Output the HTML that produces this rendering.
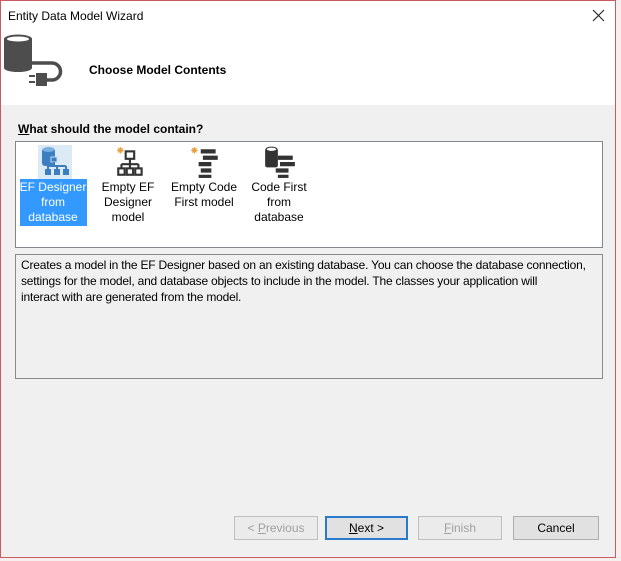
<!DOCTYPE html>
<html><head><meta charset="utf-8">
<style>
*{margin:0;padding:0;box-sizing:border-box}
body{width:621px;height:561px;background:#f7eeee;font-family:"Liberation Sans",sans-serif;font-size:12px;color:#000;position:relative;overflow:hidden}
.win{position:absolute;left:0;top:0;width:616px;height:558px;border:1px solid #c85a64;background:#f0f0f0;overflow:hidden}
.hdr{position:absolute;left:0;top:0;width:614px;height:104px;background:#fff}
.t{position:absolute;white-space:nowrap}
.box{position:absolute;border:1px solid #828790;background:#fff}
.btn{position:absolute;top:515px;height:24px;border:1px solid #adadad;background:#e1e1e1;text-align:center;line-height:22px}
.dis{color:#a0a0a0;border-color:#bfbfbf;background:#ebebeb}
.item{position:absolute;top:179px;width:70px;text-align:center;line-height:15px}
</style></head><body>
<div class="win">
<div class="hdr">
 <div class="t" style="left:7px;top:8px;font-size:12px">Entity Data Model Wizard</div>
 <svg style="position:absolute;left:591px;top:8px" width="13" height="13" viewBox="0 0 13 13"><path d="M1 1 L12 12 M12 1 L1 12" stroke="#222" stroke-width="1.1"/></svg>
 <svg style="position:absolute;left:0;top:32px" width="66" height="56" viewBox="0 0 66 56">
  <rect x="3" y="5" width="28" height="30" fill="#4d4d4d"/>
  <ellipse cx="17" cy="35" rx="14" ry="4" fill="#4d4d4d"/>
  <ellipse cx="17" cy="6" rx="14" ry="4.5" fill="#4d4d4d"/>
  <ellipse cx="17" cy="6" rx="11" ry="2.5" fill="#fff"/>
  <path d="M31 30 H51 A8.5 8.5 0 0 1 51 47 H46" stroke="#4d4d4d" stroke-width="3.5" fill="none"/>
  <rect x="35" y="40" width="11" height="13" fill="#4d4d4d"/>
  <rect x="28" y="42" width="6" height="2" fill="#4d4d4d"/><rect x="28" y="48" width="6" height="2" fill="#4d4d4d"/>
 </svg>
 <div class="t" style="left:88px;top:62px;font-weight:bold">Choose Model Contents</div>
</div>
<div class="t" style="left:17px;top:121px;font-weight:bold"><u>W</u>hat should the model contain?</div>
<div class="box" style="left:14px;top:140px;width:588px;height:107px">
 <svg style="position:absolute;left:22px;top:3px" width="34" height="34" viewBox="0 0 34 34">
  <rect x="0" y="0" width="34" height="34" fill="#c5dcef" opacity=".6"/>
  <rect x="4" y="3" width="13" height="18" rx="3" fill="#3c7fc0"/>
  <ellipse cx="10.5" cy="4.5" rx="6" ry="2.5" fill="#7ab0e0"/>
  <rect x="13" y="12" width="6" height="5" fill="#3c7fc0" stroke="#c5dcef"/>
  <path d="M16 17 V21 M10 21 H28 M10 21 V24 M19 21 V24 M28 21 V24" stroke="#3c7fc0" stroke-width="2"/>
  <rect x="7" y="24" width="6" height="6" fill="#3c7fc0"/><rect x="16" y="24" width="6" height="6" fill="#3c7fc0"/><rect x="25" y="24" width="6" height="6" fill="#3c7fc0"/>
 </svg>
 <svg style="position:absolute;left:98px;top:3px" width="34" height="34" viewBox="0 0 30 32">
  <path d="M5 2 V8 M2 5 H8 M3 3 L7 7 M7 3 L3 7" stroke="#e8a040" stroke-width="1.2"/>
  <rect x="10" y="6" width="8" height="7" fill="none" stroke="#333" stroke-width="2"/>
  <path d="M14 13 V18 M6 18 H22 M6 18 V22 M14 18 V22 M22 18 V22" stroke="#333" stroke-width="2"/>
  <rect x="3" y="22" width="6" height="6" fill="none" stroke="#333" stroke-width="2"/><rect x="11" y="22" width="6" height="6" fill="none" stroke="#333" stroke-width="2"/><rect x="19" y="22" width="6" height="6" fill="none" stroke="#333" stroke-width="2"/>
 </svg>
 <svg style="position:absolute;left:172px;top:3px" width="34" height="34" viewBox="0 0 30 32">
  <path d="M5 2 V8 M2 5 H8 M3 3 L7 7 M7 3 L3 7" stroke="#e8a040" stroke-width="1.2"/>
  <rect x="11" y="4" width="14" height="4" fill="#333"/><rect x="13" y="10" width="14" height="4" fill="#333"/><rect x="9" y="16" width="12" height="4" fill="#333"/><rect x="11" y="22" width="10" height="4" fill="#333"/><rect x="9" y="28" width="12" height="3" fill="#333"/>
 </svg>
 <svg style="position:absolute;left:247px;top:3px" width="34" height="34" viewBox="0 0 32 32">
  <rect x="2" y="3" width="12" height="18" rx="2" fill="#333"/><ellipse cx="8" cy="4" rx="5" ry="2" fill="#fff" stroke="#333"/>
  <rect x="14" y="10" width="14" height="4" fill="#333"/><rect x="16" y="16" width="14" height="4" fill="#333"/><rect x="12" y="22" width="12" height="4" fill="#333"/><rect x="14" y="28" width="10" height="3" fill="#333"/>
 </svg>
</div>
<div style="position:absolute;left:19px;top:178px;width:67px;height:47px;background:#3399ff"></div>
<div class="item" style="left:17px;color:#fff">EF Designer<br>from<br>database</div>
<div class="item" style="left:92px">Empty EF<br>Designer<br>model</div>
<div class="item" style="left:165px;width:76px">Empty Code<br>First model</div>
<div class="item" style="left:243px">Code First<br>from<br>database</div>
<div class="box" style="left:14px;top:253px;width:588px;height:125px;background:#f0f0f0;border-color:#8a8a8a"></div>
<div class="t" style="left:20px;top:256px;line-height:16px;font-size:12px;letter-spacing:-0.2px">Creates a model in the EF Designer based on an existing database. You can choose the database connection,<br>settings for the model, and database objects to include in the model. The classes your application will<br>interact with are generated from the model.</div>
<div class="btn dis" style="left:233px;width:84px">&lt; <u>P</u>revious</div>
<div class="btn" style="left:324px;width:83px;border:2px solid #2a7acb;line-height:20px"><u>N</u>ext &gt;</div>
<div class="btn dis" style="left:417px;width:84px"><u>F</u>inish</div>
<div class="btn" style="left:512px;width:86px">Cancel</div>
</div>
</body></html>
